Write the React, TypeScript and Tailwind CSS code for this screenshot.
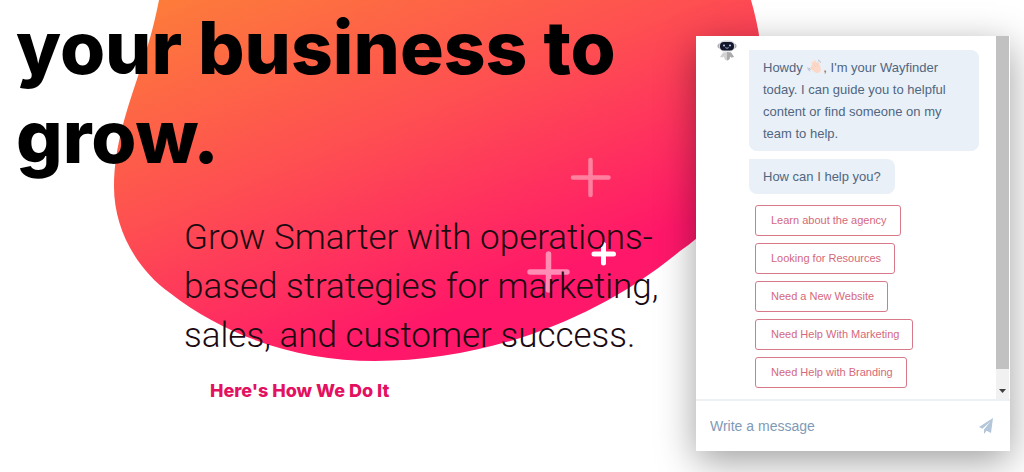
const replies = [
  "Learn about the agency",
  "Looking for Resources",
  "Need a New Website",
  "Need Help With Marketing",
  "Need Help with Branding",
];

const HeroShape = () => (
  <svg className="absolute left-0 top-0 -z-10" width="1024" height="472" viewBox="0 0 1024 472" fill="none" aria-hidden="true">
    <defs>
      <linearGradient id="hero-fill" x1="15" y1="37" x2="170" y2="428" gradientUnits="userSpaceOnUse">
        <stop offset="0" stopColor="#fd8038" />
        <stop offset="0.54" stopColor="#fe4d52" />
        <stop offset="1" stopColor="#ff1769" />
      </linearGradient>
    </defs>
    <path
      d="M159 0C154 26 148 46 139 73C128 107 114 145 114 187C114 228 136 269 170 293C228 338 300 361 375 361C484 361 596 321 680 251C744 209 784 113 751 0Z"
      fill="url(#hero-fill)"
    />
    <g stroke="#fff" strokeLinecap="round">
      <path d="M590.500 160V195M573 177.500H608.500" strokeWidth="4.500" opacity="0.4" />
      <path d="M548.500 254V290M530 272H567" strokeWidth="5.500" opacity="0.5" />
      <path d="M603.500 244.500V263M594 254H613.500" strokeWidth="5" />
    </g>
  </svg>
);

const BotAvatar = () => (
  <svg width="20" height="22" viewBox="0 0 20 22" aria-hidden="true">
    <rect x="0.500" y="3.500" width="4" height="5" rx="2" fill="#aeb0b5" />
    <rect x="15.500" y="3.500" width="4" height="5" rx="2" fill="#aeb0b5" />
    <rect x="2" y="0.500" width="16" height="11" rx="5.500" fill="#d5d6d9" />
    <rect x="3" y="2" width="14" height="8.500" rx="4" fill="#14172b" />
    <circle cx="7" cy="5.500" r="1" fill="#b9d3ef" />
    <circle cx="13" cy="5.500" r="1" fill="#b9d3ef" />
    <path d="M8.300 7.600Q10 9 11.700 7.600" stroke="#b9d3ef" strokeWidth="0.800" fill="none" />
    <path d="M6 12.500Q10 11.500 14 12.500L17 17L14.500 17.500L13 16.500Q13 20 10 20.500Q7 20 7 16.500L5.500 17.500L3 17Z" fill="#d2d2d3" />
    <path d="M10 12V20.500Q13 20 13 16.500L14.500 17.500L17 17L14 12.500Z" fill="#aaaaad" />
  </svg>
);

const WavingHand = () => (
  <svg className="mx-px inline-block align-[-2px]" width="15" height="15" viewBox="0 0 15 15" aria-hidden="true">
    <path
      d="M4 8L5 5.500Q4.300 2.500 5.500 2.300Q6.300 2.300 6.800 4.500L7 1.800Q7.800 .6 8.700 1.900L9.700 4.200L10.300 2.800Q11.300 2 11.900 3.400L13.600 8.500Q14.700 12 12 13.500Q9 15 6.800 12.600L3.500 10Q2.500 8.500 4 8Z"
      fill="#fbd8c8"
    />
    <path d="M6.900 4.500L8.500 8M9.700 4.200L10.500 7.500M4.500 8L6.500 10" stroke="#f3c6b5" strokeWidth="0.500" fill="none" />
    <path d="M.8 8.500Q1 11 3 12.300M2.300 9Q2.500 10.300 3.500 11M11 1Q13 1.500 13.500 3.500" stroke="#a9b5c7" strokeWidth="0.900" fill="none" />
  </svg>
);

const SendIcon = () => (
  <svg width="14" height="16" viewBox="0 0 14 16" aria-hidden="true">
    <path d="M14 0L0 9L3.400 10.800L11.500 3.500L5 11.600V16L7.600 12.800L12 15Z" fill="#b3c6da" />
  </svg>
);

const Bubble = ({ children }: { children: React.ReactNode }) => (
  <p className="rounded-lg rounded-tl-none bg-[#eaf0f7] px-3.5 pb-1.5 pt-[7px] text-[13px] leading-[22px] text-[#506681]">{children}</p>
);

const ChatWidget = () => (
  <aside
    className="absolute right-3.5 top-9 w-[314px] bg-white font-['Liberation_Sans',Arial,sans-serif] shadow-[0_10px_36px_rgba(0,0,0,0.38)]"
    aria-label="Chat"
  >
    <div className="flex border-b-2 border-[#edf1f4]">
      <div className="flex flex-1 items-start gap-3 pb-[11px] pl-[21px] pt-1">
        <BotAvatar />
        <div className="flex flex-1 flex-col items-start gap-2 pr-[17px] pt-2.5">
          <Bubble>
            Howdy <WavingHand />, I'm your Wayfinder today. I can guide you to helpful content or find someone on my team to help.
          </Bubble>
          <Bubble>How can I help you?</Bubble>
          <div className="flex flex-col items-start gap-[7px] pl-1.5 pt-[3px]">
            {replies.map((reply) => (
              <button
                key={reply}
                type="button"
                className="h-[31px] rounded-[3px] border border-[#d8798a] pl-[15px] pr-[13px] text-[11px] text-[#d5687b] hover:bg-rose-50"
              >
                {reply}
              </button>
            ))}
          </div>
        </div>
      </div>
      {/* scroll track */}
      <div className="mr-px flex w-[13px] flex-col bg-[#f1f1f1]">
        <div className="flex-1 bg-[#c1c1c1]" />
        <div className="flex h-[30px] items-end justify-center pb-1.5">
          <svg width="7" height="4" viewBox="0 0 7 4" aria-hidden="true">
            <path d="M0 0H7L3.500 4Z" fill="#404040" />
          </svg>
        </div>
      </div>
    </div>
    <form className="flex h-[50px] items-center pl-3.5 pr-[17px]" onSubmit={(e) => e.preventDefault()}>
      <input
        type="text"
        aria-label="Write a message"
        placeholder="Write a message"
        className="min-w-0 flex-1 text-sm text-[#33475b] outline-none placeholder:text-[#7f9ab6]"
      />
      <button type="submit" aria-label="Send">
        <SendIcon />
      </button>
    </form>
  </aside>
);

const App = () => {
  return (
    <main className="relative isolate overflow-hidden bg-white pb-[71px]">
      <HeroShape />
      <section className="max-w-[690px] pl-4 pt-[3px]">
        <h1 className="font-['Inter',sans-serif] text-[73px] font-extrabold leading-[89px] text-black">your business to grow.</h1>
        <div className="pl-[168px] pt-8">
          <p className="font-['Roboto',sans-serif] text-[35px] font-light leading-[49px] text-[#1b0a12]">
            Grow Smarter with operations-based strategies for marketing, sales, and customer success.
          </p>
          <a href="#how" className="ml-[26px] mt-[19px] inline-block font-['Inter',sans-serif] text-[18px] font-extrabold leading-6 text-[#e3115f]">
            Here's How We Do It
          </a>
        </div>
      </section>
      <ChatWidget />
    </main>
  );
};

export default App;
